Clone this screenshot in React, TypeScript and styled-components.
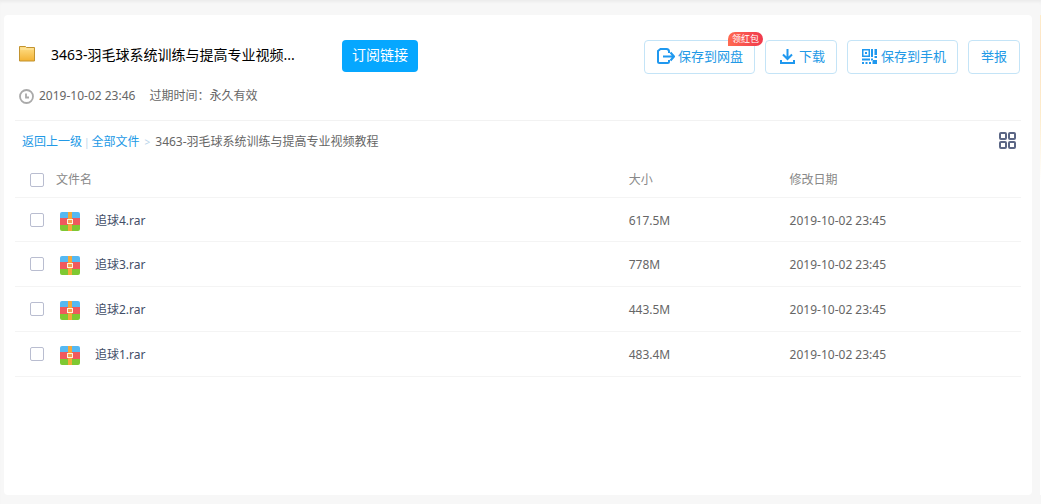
import React from "react";
import styled, { createGlobalStyle } from "styled-components";

const GlobalStyle = createGlobalStyle`
  *, *::before, *::after { box-sizing: border-box; }
  body {
    margin: 0;
    background: #f7f7f7;
    color: #666;
    font: 12px/18px "Noto Sans", "Noto Sans CJK SC", sans-serif;
  }
  button { font-family: inherit; cursor: pointer; }
`;

const Page = styled.div`
  display: flex;
  gap: 8px;
  min-height: 100vh;
  padding: 15px 0 9px 4px;
  box-shadow: inset 0 3px 3px -1px #ececec;
`;

const Card = styled.main`
  flex: 1;
  min-width: 0;
  padding: 25px 11px 20px 11px;
  border-radius: 4px;
  background: #fff;
`;

const PromoRail = styled.aside`
  width: 1px;
  background: linear-gradient(#fdeccb, #fde3c4 35px, #fdeccb 100px, #fff 165px);
`;

const Header = styled.header`
  padding: 0 1px 15px 4px;
  border-bottom: 1px solid #f2f2f2;
`;

const TitleRow = styled.div`
  display: flex;
  align-items: flex-start;
  justify-content: space-between;
  height: 34px;
`;

const TitleGroup = styled.div`
  display: flex;
  align-items: center;
  height: 32px;
`;

const Title = styled.h1`
  width: 291px;
  margin: 0 0 0 16px;
  padding-bottom: 2px;
  color: #000;
  font-size: 14px;
  font-weight: 400;
  line-height: 20px;
  white-space: nowrap;
`;

const SubscribeButton = styled.button`
  height: 32px;
  padding: 0 10px 2px;
  border: 0;
  border-radius: 4px;
  background: #06a7ff;
  color: #fff;
  font-size: 14px;
  line-height: 20px;
  white-space: nowrap;
`;

const Actions = styled.div`
  display: flex;
  gap: 10px;
`;

const ActionButton = styled.button`
  position: relative;
  display: flex;
  align-items: center;
  gap: 3px;
  height: 34px;
  padding: 0 11px 2px 12px;
  border: 1px solid #c4e4f7;
  border-radius: 4px;
  background: #fff;
  color: #2299e6;
  font-size: 13px;
  line-height: 20px;
  white-space: nowrap;
`;

const PlainAction = styled(ActionButton)`
  padding: 0 12px 2px;
`;

const Badge = styled.span`
  position: absolute;
  top: -9px;
  right: -9px;
  padding: 0 4px;
  border-radius: 7px 7px 7px 0;
  background: linear-gradient(90deg, #ff6a50, #f0394d);
  color: #fff;
  font-size: 9px;
  line-height: 14px;
`;

const Meta = styled.div`
  display: flex;
  align-items: center;
  gap: 5px;
  margin-top: 13px;
`;

const Expiry = styled.span`
  margin-left: 9px;
`;

const PathBar = styled.div`
  display: flex;
  align-items: center;
  justify-content: space-between;
  height: 40px;
  padding: 0 5px 0 7px;
`;

const Breadcrumb = styled.nav`
  display: flex;
  align-items: center;
  padding-top: 2px;
  white-space: nowrap;
`;

const Crumb = styled.a`
  color: #2299e6;
  text-decoration: none;
`;

const Divider = styled.span<{ $gap: number }>`
  margin: 0 ${(p) => p.$gap}px;
  color: #b8d4ea;
  font-size: 10px;
`;

const ViewToggle = styled.button`
  display: flex;
  padding: 0;
  border: 0;
  background: none;
`;

const FileTable = styled.table`
  width: 100%;
  border-collapse: separate;
  border-spacing: 0;
  table-layout: fixed;
`;

const HeadCell = styled.th<{ $width: string }>`
  width: ${(p) => p.$width};
  height: 37px;
  padding: 2px 0 0;
  border-bottom: 1px solid #f4f4f4;
  color: #888;
  font-weight: 400;
  text-align: left;
`;

const Cell = styled.td`
  height: 45px;
  padding: 2px 0 0;
  border-bottom: 1px solid #f4f4f4;
  tr:first-child > & { height: 44px; }
`;

const NameCell = styled.div`
  display: flex;
  align-items: center;
  padding-left: 15px;
`;

const Checkbox = styled.input`
  appearance: none;
  width: 14px;
  height: 14px;
  margin: 0;
  border: 1px solid #b9bdd0;
  border-radius: 2px;
  background: #fff;
  &:checked { background: #06a7ff; }
  td & { margin-bottom: 2px; }
`;

const HeadLabel = styled.label`
  margin-left: 12px;
`;

const FileLabel = styled.label`
  display: flex;
  align-items: center;
  gap: 15px;
  margin-left: 16px;
  color: #424e67;
`;

const FolderIcon = () => (
  <svg width="16" height="20" viewBox="0 0 16 20" aria-hidden="true">
    <defs>
      <linearGradient id="folder" x1="0" y1="0" x2="0" y2="1">
        <stop offset="0" stopColor="#ffe08a" />
        <stop offset="1" stopColor="#f3b233" />
      </linearGradient>
    </defs>
    <path d="M.5 .5h6l1 1h8v13.500h-15z" fill="url(#folder)" stroke="#c2932f" />
    <path d="M1.500 3h13" stroke="#ffe9a8" />
  </svg>
);

const ClockIcon = () => (
  <svg width="15" height="15" viewBox="0 0 15 15" fill="none" stroke="#aaa" aria-hidden="true">
    <circle cx="7.500" cy="7.500" r="6.500" strokeWidth="1.800" />
    <path d="M7 4.500v4h3" strokeWidth="1.800" />
  </svg>
);

const SaveIcon = () => (
  <svg width="18" height="18" viewBox="0 0 18 18" fill="none" stroke="#1f98ef" strokeWidth="2" aria-hidden="true">
    <path d="M12 6V4.500Q12 2 9.500 2H3.500L1 4V14.500Q1 16 2.500 16H10.500Q12 16 12 14.500V13" />
    <path d="M6 9.500h11M13.500 5.500l3.500 4-3.500 4" />
  </svg>
);

const DownloadIcon = () => (
  <svg width="18" height="18" viewBox="0 0 18 18" fill="none" stroke="#1f98ef" strokeWidth="2" aria-hidden="true">
    <path d="M9.500 2v10M5 7.500l4.500 4.500 4.500-4.500M3 13v3h13v-3" />
  </svg>
);

const QrIcon = () => (
  <svg width="18" height="18" viewBox="0 0 18 18" fill="#1f98ef" aria-hidden="true">
    <path fillRule="evenodd" d="M2 2h8v8H2zM3.500 3.500v5h5v-5zM5 5h2v2H5zM11 2h2v8h-2zM14.500 2H17v6h-2.500zM14.500 9H17v2h-2.500zM2 11.500h8v2H2zM11 11.500h2v2h-2zM2 15h2v2H2zM5.500 15h2v2h-2zM9 15h2v2H9zM12.500 13H17v4h-4.500z" />
  </svg>
);

const GridIcon = () => (
  <svg width="17" height="18" viewBox="0 0 17 18" fill="none" stroke="#5b6685" strokeWidth="2" aria-hidden="true">
    <rect x="1" y="1" width="6" height="6" rx="1" />
    <rect x="10" y="1" width="6" height="6" rx="1" />
    <rect x="1" y="10" width="6" height="6" rx="1" />
    <rect x="10" y="10" width="6" height="6" rx="1" />
  </svg>
);

const ArchiveIcon = () => (
  <svg width="20" height="22" viewBox="0 -2 20 22" aria-hidden="true">
    <path d="M0 7V2Q0 0 2 0H18Q20 0 20 2V7z" fill="#56b9f2" />
    <path d="M0 6h20v7H0z" fill="#f0595d" />
    <path d="M0 13h20v4Q20 19 18 19H2Q0 19 0 17z" fill="#7fc832" />
    <path d="M8 0h4v19H8z" fill="#f5a93b" />
    <rect x="7.500" y="7.500" width="5" height="4" fill="#f5a050" stroke="#fff3dc" />
  </svg>
);

const files = [
  { name: "追球4.rar", size: "617.5M", date: "2019-10-02 23:45" },
  { name: "追球3.rar", size: "778M", date: "2019-10-02 23:45" },
  { name: "追球2.rar", size: "443.5M", date: "2019-10-02 23:45" },
  { name: "追球1.rar", size: "483.4M", date: "2019-10-02 23:45" },
];

export default function App() {
  return (
    <>
      <GlobalStyle />
      <Page lang="zh-CN">
        <Card>
          <Header>
            <TitleRow>
              <TitleGroup>
                <FolderIcon />
                <Title>3463-羽毛球系统训练与提高专业视频...</Title>
                <SubscribeButton>订阅链接</SubscribeButton>
              </TitleGroup>
              <Actions>
                <ActionButton>
                  <SaveIcon />
                  保存到网盘
                  <Badge>领红包</Badge>
                </ActionButton>
                <ActionButton>
                  <DownloadIcon />
                  下载
                </ActionButton>
                <ActionButton>
                  <QrIcon />
                  保存到手机
                </ActionButton>
                <PlainAction>举报</PlainAction>
              </Actions>
            </TitleRow>
            <Meta>
              <ClockIcon />
              <time>2019-10-02 23:46</time>
              <Expiry>过期时间：永久有效</Expiry>
            </Meta>
          </Header>
          <PathBar>
            <Breadcrumb aria-label="路径">
              <Crumb href="#up">返回上一级</Crumb>
              <Divider $gap={2}>|</Divider>
              <Crumb href="#all">全部文件</Crumb>
              <Divider $gap={5}>&gt;</Divider>
              <span>3463-羽毛球系统训练与提高专业视频教程</span>
            </Breadcrumb>
            <ViewToggle aria-label="切换视图">
              <GridIcon />
            </ViewToggle>
          </PathBar>
          <FileTable>
            <thead>
              <tr>
                <HeadCell $width="61%">
                  <NameCell>
                    <Checkbox type="checkbox" id="all-files" />
                    <HeadLabel htmlFor="all-files">文件名</HeadLabel>
                  </NameCell>
                </HeadCell>
                <HeadCell $width="16%">大小</HeadCell>
                <HeadCell $width="23%">修改日期</HeadCell>
              </tr>
            </thead>
            <tbody>
              {files.map((file) => (
                <tr key={file.name}>
                  <Cell>
                    <NameCell>
                      <Checkbox type="checkbox" id={file.name} />
                      <FileLabel htmlFor={file.name}>
                        <ArchiveIcon />
                        {file.name}
                      </FileLabel>
                    </NameCell>
                  </Cell>
                  <Cell>{file.size}</Cell>
                  <Cell>{file.date}</Cell>
                </tr>
              ))}
            </tbody>
          </FileTable>
        </Card>
        <PromoRail />
      </Page>
    </>
  );
}
